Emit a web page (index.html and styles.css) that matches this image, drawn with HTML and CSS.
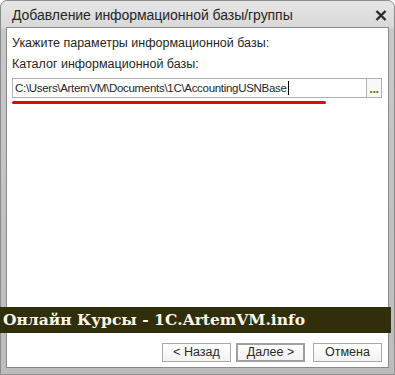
FILE: index.html
```html
<!DOCTYPE html>
<html>
<head>
<meta charset="utf-8">
<link rel="stylesheet" href="styles.css">
</head>
<body>
<div class="window">
  <div class="titlebar">
    <span class="title">Добавление информационной базы/группы</span>
    <svg class="close" width="12" height="11" viewBox="0 0 12 11"><path d="M1.5 1 L10.5 10 M10.5 1 L1.5 10" stroke="#2a2a2a" stroke-width="2.4" fill="none"/></svg>
  </div>
  <div class="client">
    <div class="label first">Укажите параметры информационной базы:</div>
    <div class="label">Каталог информационной базы:</div>
    <div class="field">
      <div class="input">C:\Users\ArtemVM\Documents\1C\AccountingUSNBase<span class="caret"></span></div>
      <div class="dots">...</div>
    </div>
    <div class="underline"></div>
    <div class="buttons">
      <div class="btn">&lt; Назад</div>
      <div class="btn default">Далее &gt;</div>
      <div class="btn cancel">Отмена</div>
    </div>
  </div>
  <div class="banner">Онлайн Курсы - 1С.ArtemVM.info</div>
</div>
</body>
</html>
```
FILE: styles.css
```css
html, body {
  margin: 0;
  padding: 0;
  background: #ffffff;
}
.window {
  position: relative;
  width: 395px;
  height: 375px;
  box-sizing: border-box;
  display: flex;
  flex-direction: column;
  padding: 0 5px 6px 5px;
  border: 1px solid #8c8c8c;
  border-radius: 7px 7px 0 0;
  background: linear-gradient(to bottom, #e6e6e6 0px, #d8d8d8 27px, #c8c8c8 28px, #bcbcbc 100%);
  font-family: "Liberation Sans", Arial, sans-serif;
}
.titlebar {
  height: 26px;
  display: flex;
  align-items: center;
  justify-content: space-between;
  padding: 0 2px 0 6px;
}
.title {
  font-size: 14px;
  color: #262626;
  letter-spacing: -0.05px;
  margin-top: 2px;
}
.close {
  margin-top: 2px;
}
.client {
  flex: 1;
  background: #ffffff;
  border: 1px solid #8a8a8a;
  display: flex;
  flex-direction: column;
  padding: 0 6px 5px 5px;
  font-size: 12.5px;
  color: #262626;
}
.label {
  height: 14px;
  line-height: 14px;
}
.first {
  margin-top: 8px;
  margin-bottom: 7px;
}
.field {
  display: flex;
  margin-top: 7px;
  height: 20px;
}
.input {
  flex: 1;
  box-sizing: border-box;
  border: 1px solid #b0b0b0;
  border-right: none;
  padding: 0 2px;
  line-height: 18px;
  font-size: 11.5px;
  letter-spacing: -0.3px;
  white-space: nowrap;
}
.caret {
  display: inline-block;
  width: 1px;
  height: 14px;
  background: #000;
  vertical-align: -3px;
  margin-left: 1px;
}
.dots {
  width: 16px;
  box-sizing: border-box;
  border: 1px solid #b0b0b0;
  background: #f8f8f8;
  color: #7f6e00;
  font-weight: bold;
  font-size: 13px;
  line-height: 20px;
  text-align: center;
  letter-spacing: -0.5px;
  overflow: hidden;
}
.underline {
  width: 314px;
  height: 3px;
  margin-top: 3px;
  background: #d01010;
  border-radius: 2px;
}
.buttons {
  margin-top: auto;
  display: flex;
  justify-content: flex-end;
  gap: 5px;
}
.btn {
  width: 69px;
  height: 19px;
  box-sizing: border-box;
  border: 1px solid #a8a8a8;
  background: linear-gradient(#ffffff, #f2f2f2);
  font-size: 12.5px;
  line-height: 17px;
  text-align: center;
  color: #2a2a2a;
}
.btn.default {
  border: 2px solid #a0a0a0;
  line-height: 15px;
}
.btn.cancel {
  margin-left: 3px;
}
.banner {
  position: absolute;
  left: -1px;
  top: 306px;
  width: 391px;
  height: 26px;
  background: #312e0c;
  color: #fbf6e8;
  font-family: "DejaVu Serif", Georgia, serif;
  font-weight: bold;
  font-size: 15.5px;
  line-height: 26px;
  padding-left: 3px;
  box-sizing: border-box;
  white-space: nowrap;
}
```
